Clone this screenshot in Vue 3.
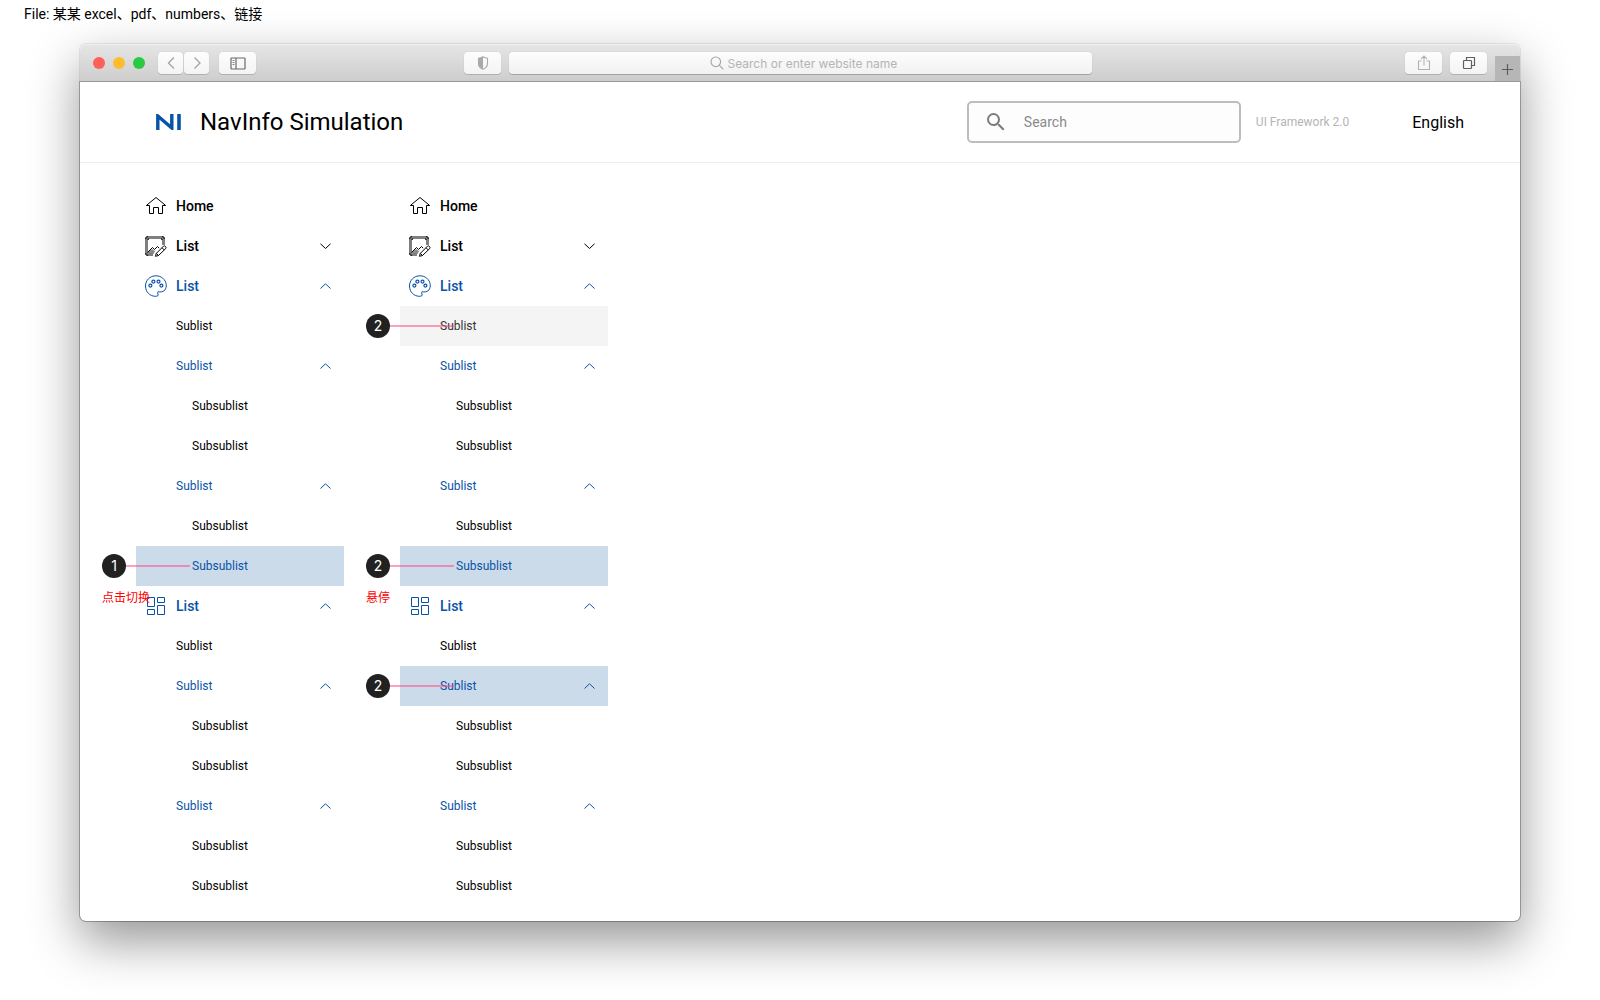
<script setup>
const tree = [
  { level: 0, text: 'Home', icon: 'home' },
  { level: 0, text: 'List', icon: 'image', arrow: 'down' },
  { level: 0, text: 'List', icon: 'palette', arrow: 'up' },
  { level: 1, text: 'Sublist' },
  { level: 1, text: 'Sublist', arrow: 'up' },
  { level: 2, text: 'Subsublist' },
  { level: 2, text: 'Subsublist' },
  { level: 1, text: 'Sublist', arrow: 'up' },
  { level: 2, text: 'Subsublist' },
  { level: 2, text: 'Subsublist' },
  { level: 0, text: 'List', icon: 'grid', arrow: 'up' },
  { level: 1, text: 'Sublist' },
  { level: 1, text: 'Sublist', arrow: 'up' },
  { level: 2, text: 'Subsublist' },
  { level: 2, text: 'Subsublist' },
  { level: 1, text: 'Sublist', arrow: 'up' },
  { level: 2, text: 'Subsublist' },
  { level: 2, text: 'Subsublist' },
]

const withStates = (states) => tree.map((item, i) => ({ ...item, ...states[i] }))

const menus = [
  {
    name: 'Selected state',
    items: withStates({ 9: { state: 'active', badge: 1, note: '点击切换' } }),
  },
  {
    name: 'Hover state',
    items: withStates({
      3: { state: 'hover', badge: 2 },
      9: { state: 'active', badge: 2, note: '悬停' },
      12: { state: 'active', badge: 2 },
    }),
  },
]
</script>

<template>
  <div class="page">
    <p class="caption">File: 某某 excel、pdf、numbers、链接</p>

    <div class="window">
      <div class="toolbar">
        <div class="side start">
          <span class="light red"></span>
          <span class="light yellow"></span>
          <span class="light green"></span>
          <div class="pair">
            <button class="tool narrow" aria-label="Back">
              <svg width="24" height="22" viewBox="0 0 24 22"><path d="M15 5.500 L9.500 11 L15 16.500" fill="none" stroke="#a3a3a3" stroke-width="1.300" /></svg>
            </button>
            <button class="tool narrow" aria-label="Forward">
              <svg width="24" height="22" viewBox="0 0 24 22"><path d="M9.500 5.500 L15 11 L9.500 16.500" fill="none" stroke="#a3a3a3" stroke-width="1.300" /></svg>
            </button>
          </div>
          <button class="tool" aria-label="Sidebar">
            <svg width="16" height="13" viewBox="0 0 16 13" fill="none" stroke="#6a6a6a"><rect x="1" y="1" width="14" height="11" rx="0.500" stroke-width="1.200" /><path d="M6 1V12" stroke-width="1.200" /><path d="M2.500 3.500H4.500M2.500 5.500H4.500M2.500 7.500H4.500" stroke-width="0.800" /></svg>
          </button>
        </div>

        <div class="middle">
          <button class="tool" aria-label="Privacy report">
            <svg width="12" height="14" viewBox="0 0 12 14"><path d="M6 .8C4.600 1.700 3 2.200 1.500 2.300V7.500C1.500 10.300 3 12.200 6 13.300C9 12.200 10.500 10.300 10.500 7.500V2.300C9 2.200 7.400 1.700 6 .8Z" fill="none" stroke="#a9a9a9" stroke-width="1.100" /><path d="M6 .8C4.600 1.700 3 2.200 1.500 2.300V7.500C1.500 10.300 3 12.200 6 13.300Z" fill="#a9a9a9" /></svg>
          </button>
          <label class="address">
            <svg width="14" height="14" viewBox="0 0 14 14" fill="none" stroke="#a8a8a8" stroke-width="1.200"><circle cx="5.800" cy="5.800" r="4.800" /><path d="M9.300 9.300L13.300 13.300" /></svg>
            <input type="text" placeholder="Search or enter website name" aria-label="Address" />
          </label>
        </div>

        <div class="side end">
          <button class="tool" aria-label="Share">
            <svg width="14" height="16" viewBox="0 0 14 16" fill="none" stroke="#b3b3b3" stroke-width="1.100"><path d="M4.500 6H1.500V14.500H12.500V6H9.500M7 10.500V1.200M4 4L7 1L10 4" /></svg>
          </button>
          <button class="tool" aria-label="Tabs">
            <svg width="14" height="14" viewBox="0 0 14 14" fill="none" stroke="#5f5f5f" stroke-width="1.200"><rect x="1.500" y="4.500" width="8" height="8" rx="0.800" /><path d="M4.500 4.500V1.500H12.500V9.500H9.500" /></svg>
          </button>
          <button class="newtab" aria-label="New tab">
            <svg width="13" height="13" viewBox="0 0 13 13" stroke="#5c5c5c" stroke-width="1.200"><path d="M6.500 1V12M1 6.500H12" /></svg>
          </button>
        </div>
      </div>

      <div class="content">
        <header class="header">
          <svg class="logo" width="25" height="16" viewBox="0 0 25 16" fill="none" stroke="#0853a6" role="img" aria-label="NI">
            <polyline points="1.800,16 1.800,2 15.800,14 15.800,0" stroke-width="3.400" />
            <line x1="23" y1="0" x2="23" y2="16" stroke-width="3.600" />
          </svg>
          <h1>NavInfo Simulation</h1>
          <label class="search">
            <svg width="24" height="24" viewBox="0 0 24 24" fill="#7c7c7c"><path d="M15.500 14h-.79l-.28-.27A6.471 6.471 0 0 0 16 9.500 6.500 6.500 0 1 0 9.500 16c1.610 0 3.090-.59 4.230-1.570l.27.28v.79l5 4.990L20.490 19l-4.990-5zm-6 0C7.010 14 5 11.990 5 9.500S7.010 5 9.500 5 14 7.010 14 9.500 11.990 14 9.500 14z" /></svg>
            <input type="search" placeholder="Search" aria-label="Search" />
          </label>
          <span class="version">UI Framework 2.0</span>
          <button class="language">English</button>
        </header>

        <main class="body">
          <nav v-for="menu in menus" :key="menu.name" :aria-label="menu.name">
            <ul>
              <li v-for="(item, i) in menu.items" :key="i">
                <button
                  class="row"
                  :class="['level-' + item.level, item.state, { open: item.arrow === 'up' }]"
                >
                  <svg v-if="item.icon === 'home'" class="icon" viewBox="0 0 24 24"><path d="M2.300 11.500L12 3.500L21.700 11.500M2.500 11.500H5.500V19.500H9.500V13.500H14.500V19.500H18.500V11.500H21.500" /></svg>
                  <svg v-else-if="item.icon === 'image'" class="icon" viewBox="0 0 24 24">
                    <path d="M3.500 18L8.500 15L10.500 17L12 16L8 22H4Z" fill="#8a8a8a" stroke="none" />
                    <path d="M9 20.500H4.500A2 2 0 0 1 2.500 18.500V5.500A2 2 0 0 1 4.500 3.500H17.500A2 2 0 0 1 19.500 5.500V11" stroke="#7f7f7f" stroke-width="3" />
                    <path d="M1.500 5A2.500 2.500 0 0 1 4 2.500M18 2.500A2.500 2.500 0 0 1 20.500 5M4 21.500A2.500 2.500 0 0 1 1.500 19M4 6V5H5M17 5H18V6" />
                    <path d="M3.500 18.500L8.500 13.500L10.500 15.500L13.500 12.500L15.200 14.200" />
                    <path d="M12.200 19.500L19.500 12.200Q20.500 11.500 21.500 12.500T21.800 14.500L14.500 21.500L11.500 22.300Z" fill="#fff" />
                    <path d="M18 13.700L20.300 16M12.300 19.300L14.500 21.500" />
                  </svg>
                  <svg v-else-if="item.icon === 'palette'" class="icon" viewBox="0 0 24 24">
                    <path d="M14 17.700C16 18.200 19 18 20.800 16.200C22 14.500 22.500 12.500 22.200 10.500C21.500 5.300 17.200 1.800 12 1.800C6 1.800 1.500 6.300 1.500 12C1.500 18 6 22.300 11.500 22.300C13.800 22.300 14.500 21.500 13.900 20C13.500 19 13.500 18.300 14 17.700Z" />
                    <g stroke-width="1.200"><circle cx="6.400" cy="11.600" r="1.500" /><circle cx="9.400" cy="7.600" r="1.500" /><circle cx="14.500" cy="7.600" r="1.500" /><circle cx="17.400" cy="11.600" r="1.500" /></g>
                  </svg>
                  <svg v-else-if="item.icon === 'grid'" class="icon" viewBox="0 0 24 24"><path d="M3.500 3.500H10.500V12.500H3.500ZM13.500 3.500H20.500V8.500H13.500ZM3.500 15.500H10.500V20.500H3.500ZM13.500 11.500H20.500V20.500H13.500Z" /></svg>
                  <span class="text">{{ item.text }}</span>
                  <svg v-if="item.arrow" class="arrow" viewBox="0 0 12 12">
                    <path :d="item.arrow === 'up' ? 'M1.500 8.500L6.500 3.800L11.500 8.500' : 'M1.500 3.800L6.500 8.500L11.500 3.800'" />
                  </svg>
                </button>
                <div v-if="item.badge" class="mark">
                  <span class="badge">{{ item.badge }}</span>
                  <span v-if="item.note" class="note">{{ item.note }}</span>
                </div>
              </li>
            </ul>
          </nav>
        </main>
      </div>
    </div>
  </div>
</template>

<style>
body {
  margin: 0;
  background: #fff;
}
</style>

<style scoped>
.page {
  min-height: 100vh;
  box-sizing: border-box;
  padding: 0 80px 78px;
  overflow: hidden;
  font-family: Roboto, "Noto Sans CJK SC", sans-serif;
  color: #000;
}
button,
input {
  font: inherit;
  color: inherit;
  border: 0;
  padding: 0;
  background: none;
  outline: none;
}
svg {
  flex: none;
}
.caption {
  margin: 0 0 0 -56px;
  height: 44px;
  line-height: 28px;
  font-size: 14px;
}
.window {
  border-radius: 6px;
  background: #fff;
  box-shadow: 0 0 0 1px rgba(0, 0, 0, 0.08), 0 20px 50px rgba(0, 0, 0, 0.42);
}
.content {
  border-radius: 0 0 6px 6px;
  box-shadow: 0 0 0 1px rgba(0, 0, 0, 0.22);
}
.toolbar {
  display: flex;
  align-items: center;
  height: 38px;
  box-sizing: border-box;
  padding-top: 1px;
  border-bottom: 1px solid #c4c4c4;
  border-radius: 6px 6px 0 0;
  background: linear-gradient(#e6e6e6, #cdcdcd);
  box-shadow: inset 0 1px 0 #f0f0f0;
}
.side {
  flex: 96;
  display: flex;
  align-items: center;
  gap: 8px;
}
.start::before {
  content: "";
  width: 5px;
}
.light {
  width: 12px;
  height: 12px;
  border-radius: 50%;
}
.red {
  background: #fe5f57;
}
.yellow {
  background: #febd2e;
}
.green {
  background: #29ca41;
}
.pair {
  display: flex;
  gap: 1px;
  margin: 0 2px 0 5px;
}
.tool {
  display: flex;
  align-items: center;
  justify-content: center;
  width: 37px;
  height: 22px;
  border-radius: 4px;
  background: linear-gradient(#fdfdfd, #f4f4f4);
  box-shadow: 0 1px 0 rgba(0, 0, 0, 0.14), 0 0 1px rgba(0, 0, 0, 0.2);
}
.narrow {
  width: 25px;
}
.middle {
  flex: 157;
  display: flex;
  gap: 8px;
  margin-right: 44px;
}
.address {
  flex: 1;
  display: flex;
  align-items: center;
  justify-content: center;
  gap: 4px;
  height: 22px;
  padding-left: 8px;
  border-radius: 4px;
  background: linear-gradient(#fdfdfd, #f2f2f2);
  box-shadow: 0 1px 0 rgba(0, 0, 0, 0.2), 0 0 1px rgba(0, 0, 0, 0.2);
}
.address input {
  width: 172px;
  padding: 1px 0 0;
  font-family: Inter, sans-serif;
  font-size: 12px;
}
.address input::placeholder {
  color: #b4b4b4;
  opacity: 1;
}
.end {
  justify-content: flex-end;
  align-self: stretch;
}
.newtab {
  align-self: flex-end;
  display: flex;
  align-items: center;
  justify-content: center;
  width: 25px;
  height: 25px;
  padding-top: 1px;
  background: #b6b6b6;
}
.header {
  display: flex;
  align-items: center;
  height: 80px;
  padding: 0 56px 0 76px;
  border-bottom: 1px solid #eee;
}
h1 {
  margin: 0 auto 0 19px;
  font-size: 24px;
  font-weight: 400;
  line-height: 32px;
}
.search {
  display: flex;
  align-items: center;
  gap: 16px;
  box-sizing: border-box;
  width: 274px;
  height: 42px;
  padding: 0 14px 0 15px;
  border: 2px solid #bdbdbd;
  border-radius: 5px;
  background: #fdfdfd;
}
.search input {
  flex: 1;
  min-width: 0;
  font-size: 14px;
}
.search input::placeholder {
  color: #8a8a8a;
  opacity: 1;
}
.version {
  margin: 0 63px 0 15px;
  font-size: 12px;
  color: #b4b4b4;
}
.language {
  font-size: 16px;
}
.body {
  display: flex;
  gap: 56px;
  padding: 23px 56px 15px;
}
ul {
  list-style: none;
  margin: 0;
  padding: 0;
  width: 208px;
}
li {
  position: relative;
}
.row {
  display: flex;
  align-items: center;
  width: 100%;
  height: 40px;
  padding: 0 13px 0 8px;
  font-size: 12px;
  text-align: left;
}
.level-0 {
  font-size: 14px;
  font-weight: 500;
}
.level-1 {
  padding-left: 40px;
}
.level-2 {
  padding-left: 56px;
}
.open {
  color: #0853a6;
}
.hover {
  background: #f4f4f4;
  color: #333;
}
.active {
  background: #ccdbea;
  color: #0853a6;
}
.icon {
  width: 24px;
  height: 24px;
  margin-right: 8px;
  fill: none;
  stroke: currentColor;
}
.text {
  flex: 1;
}
.arrow {
  width: 12px;
  height: 12px;
  fill: none;
  stroke: currentColor;
}
.mark {
  position: absolute;
  left: -34px;
  top: 8px;
  width: 88px;
  pointer-events: none;
  background: linear-gradient(rgba(255, 64, 129, 0.5), rgba(255, 64, 129, 0.5)) right 11px / 64px 2px no-repeat;
}
.badge {
  display: block;
  width: 24px;
  height: 24px;
  border-radius: 50%;
  background: #212121;
  color: #fff;
  font-family: Inter, sans-serif;
  font-size: 14px;
  line-height: 24px;
  text-align: center;
}
.note {
  position: absolute;
  left: 0;
  top: 34px;
  z-index: 1;
  font-size: 12px;
  line-height: 20px;
  color: #f00;
  white-space: nowrap;
}
</style>
